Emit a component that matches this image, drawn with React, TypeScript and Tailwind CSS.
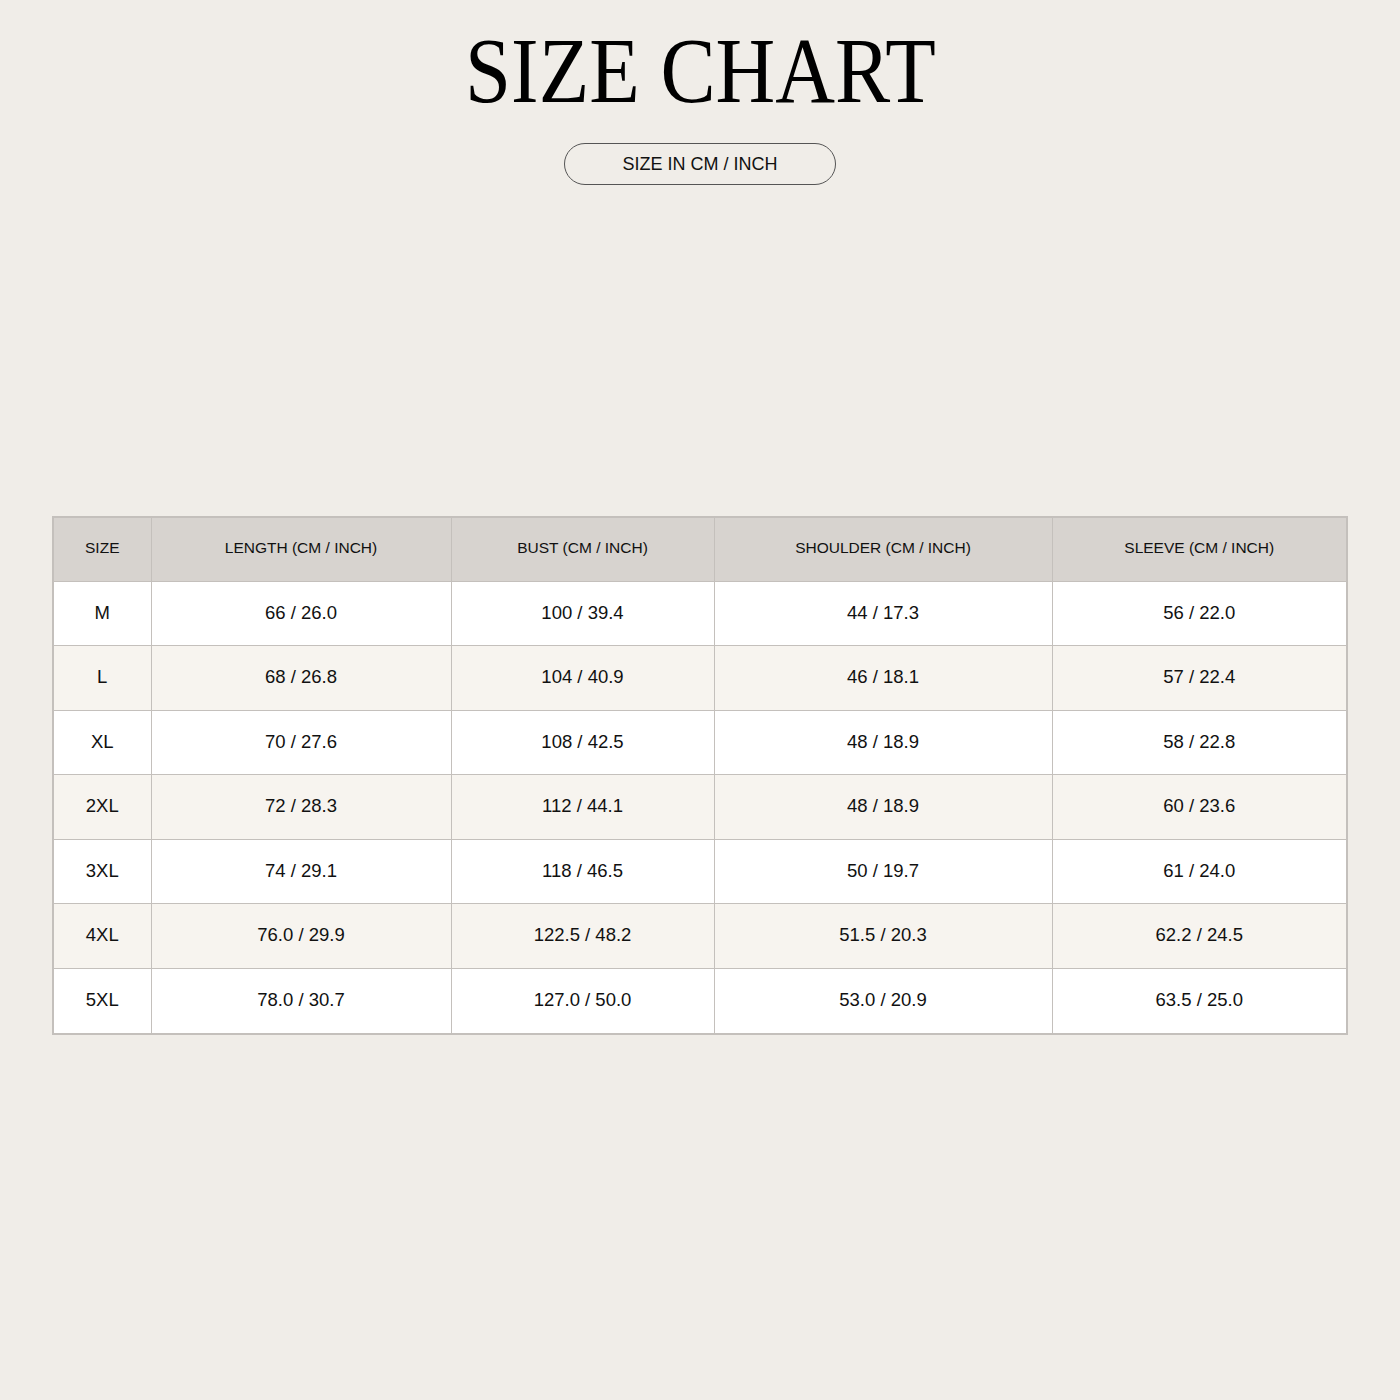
import React from "react";

const headers = ["SIZE", "LENGTH (CM / INCH)", "BUST (CM / INCH)", "SHOULDER (CM / INCH)", "SLEEVE (CM / INCH)"];
const rows = [
  ["M", "66 / 26.0", "100 / 39.4", "44 / 17.3", "56 / 22.0"],
  ["L", "68 / 26.8", "104 / 40.9", "46 / 18.1", "57 / 22.4"],
  ["XL", "70 / 27.6", "108 / 42.5", "48 / 18.9", "58 / 22.8"],
  ["2XL", "72 / 28.3", "112 / 44.1", "48 / 18.9", "60 / 23.6"],
  ["3XL", "74 / 29.1", "118 / 46.5", "50 / 19.7", "61 / 24.0"],
  ["4XL", "76.0 / 29.9", "122.5 / 48.2", "51.5 / 20.3", "62.2 / 24.5"],
  ["5XL", "78.0 / 30.7", "127.0 / 50.0", "53.0 / 20.9", "63.5 / 25.0"],
];

export default function App() {
  return (
    <div className="w-[1400px] h-[1400px] bg-[#f0ede8] flex flex-col items-center text-black" style={{ fontFamily: '"Liberation Sans", Arial, sans-serif' }}>
      <h1
        className="mt-[22px] text-[94px] leading-[96px] font-normal scale-x-[0.88]"
        style={{ fontFamily: '"Liberation Serif", "Times New Roman", serif' }}
      >
        SIZE CHART
      </h1>
      <div className="mt-[25px] w-[272px] h-[42px] rounded-full border border-[#555] flex items-center justify-center text-[18px] text-[#111]">
        SIZE IN CM / INCH
      </div>
      <div className="mt-[331px] w-[1296px] border-2 border-[#c4c0bc]">
        <table className="w-full table-fixed border-collapse">
          <colgroup>
            <col className="w-[97px]" />
            <col className="w-[300px]" />
            <col className="w-[263px]" />
            <col className="w-[338px]" />
            <col />
          </colgroup>
          <thead>
            <tr className="bg-[#d7d3cf] h-[63px]">
              {headers.map((h, i) => (
                <th key={i} className={`font-normal text-[15.5px] text-[#111] text-center pb-[3px] ${i > 0 ? "border-l border-[#c4c0bc]" : ""}`}>
                  {h}
                </th>
              ))}
            </tr>
          </thead>
          <tbody>
            {rows.map((r, ri) => (
              <tr key={ri} className={`h-[64.5px] border-t border-[#c4c0bc] ${ri % 2 === 1 ? "bg-[#f7f4ef]" : "bg-white"}`}>
                {r.map((c, ci) => (
                  <td key={ci} className={`text-center text-[18.5px] text-[#111] pb-[1px] ${ci > 0 ? "border-l border-[#c4c0bc]" : ""}`}>
                    {c}
                  </td>
                ))}
              </tr>
            ))}
          </tbody>
        </table>
      </div>
    </div>
  );
}
